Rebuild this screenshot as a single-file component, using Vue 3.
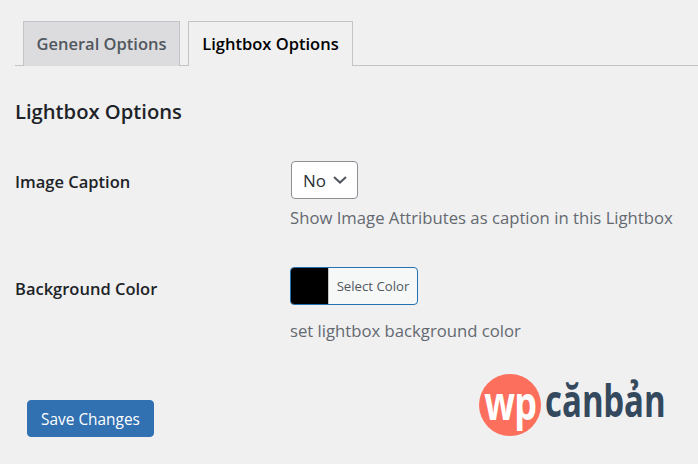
<script setup>
const tabs = [
  { label: 'General Options', active: false },
  { label: 'Lightbox Options', active: true },
]
</script>

<template>
  <div class="wrap">
    <div class="tabs">
      <a v-for="tab in tabs" :key="tab.label" class="tab" :class="{ active: tab.active }">{{ tab.label }}</a>
    </div>

    <h2 class="title">Lightbox Options</h2>

    <div class="row row-caption">
      <div class="label">Image Caption</div>
      <div class="field">
        <div class="select">
          <span>No</span>
          <svg width="14" height="8" viewBox="0 0 14 8" fill="none">
            <path d="M1 1 7 6.6 13 1" stroke="#50575e" stroke-width="2" />
          </svg>
        </div>
        <p class="desc">Show Image Attributes as caption in this Lightbox</p>
      </div>
    </div>

    <div class="row row-color">
      <div class="label">Background Color</div>
      <div class="field">
        <button class="color-btn" type="button">
          <span class="swatch"></span>
          <span class="color-text">Select Color</span>
        </button>
        <p class="desc desc-color">set lightbox background color</p>
      </div>
    </div>

    <div class="footer">
      <button class="save" type="button">Save Changes</button>
      <div class="logo">
        <div class="logo-circle"><span>wp</span></div>
        <span class="logo-text">căn bản</span>
      </div>
    </div>
  </div>
</template>

<style scoped>
.wrap {
  width: 698px;
  height: 464px;
  box-sizing: border-box;
  padding-top: 21px;
  background: #f0f0f1;
  color: #1d2327;
  font-family: "Open Sans", "Noto Sans", sans-serif;
  overflow: hidden;
}

.tabs {
  display: flex;
  gap: 8px;
  height: 45px;
  box-sizing: border-box;
  margin-left: 15px;
  padding-left: 8px;
  border-bottom: 1px solid #c3c4c7;
}

.tab {
  height: 45px;
  box-sizing: border-box;
  padding-top: 11px;
  border: 1px solid #c3c4c7;
  border-bottom: 0;
  background: #dcdcde;
  color: #50575e;
  font-size: 16.5px;
  font-weight: 600;
  line-height: 21px;
  text-align: center;
  width: 157px;
}

.tab.active {
  width: 165px;
  background: #f0f0f1;
  color: #000;
  position: relative;
  z-index: 1;
}

.title {
  margin: 32px 0 0 15px;
  font-size: 20.2px;
  font-weight: 600;
  line-height: 26px;
}

.row {
  display: flex;
  margin-left: 15px;
}

.row-caption {
  margin-top: 37px;
}

.row-color {
  margin-top: 38px;
}

.label {
  width: 275px;
  padding-top: 10px;
  font-size: 16.5px;
  font-weight: 600;
  line-height: 21px;
}

.row-color .label {
  padding-top: 11px;
}

.field {
  flex: 1;
}

.select {
  display: flex;
  align-items: center;
  justify-content: space-between;
  width: 67px;
  height: 38px;
  box-sizing: border-box;
  margin-left: 1px;
  padding: 0 10px 0 11px;
  border: 1px solid #8c8f94;
  border-radius: 4px;
  background: #fff;
  color: #2c3338;
  font-size: 17px;
}

.desc {
  margin: 8px 0 0;
  color: #646970;
  font-size: 16.7px;
  line-height: 22px;
}

.color-btn {
  display: flex;
  width: 128px;
  height: 38px;
  box-sizing: border-box;
  padding: 0;
  border: 1px solid #2271b1;
  border-radius: 4px;
  background: #f6f7f7;
  overflow: hidden;
  font-family: inherit;
}

.swatch {
  width: 37px;
  height: 100%;
  background: #000;
  border-right: 1px solid #c3c4c7;
}

.color-text {
  flex: 1;
  color: #50575e;
  font-size: 13.2px;
  line-height: 36px;
  text-align: center;
}

.desc-color {
  margin-top: 15px;
}

.footer {
  display: flex;
  justify-content: space-between;
  align-items: flex-end;
  margin: 32px 0 0 27px;
  width: 638px;
}

.save {
  width: 127px;
  height: 37px;
  padding: 2px 0 0;
  border: 1px solid #3170b1;
  border-radius: 4px;
  background: #3170b1;
  color: #fff;
  font-family: inherit;
  font-size: 15.4px;
}

.logo {
  display: flex;
  align-items: center;
  gap: 4px;
  margin-bottom: 1px;
}

.logo-circle {
  flex: none;
  display: flex;
  align-items: center;
  justify-content: center;
  width: 62px;
  height: 62px;
  border-radius: 50%;
  background: #fd6f5d;
  color: #fff;
  font-size: 46px;
  font-weight: 700;
  line-height: 62px;
}

.logo-circle span {
  display: block;
  transform: scaleX(0.78) translateY(-3px);
  letter-spacing: -1px;
}

.logo-text {
  width: 120px;
  margin-bottom: 10px;
  color: #34495e;
  font-size: 44px;
  font-weight: 700;
  line-height: 50px;
  white-space: nowrap;
  word-spacing: -12px;
  transform: scaleX(0.75);
  transform-origin: left center;
}
</style>

<style>
body {
  background: #f0f0f1;
}
</style>
